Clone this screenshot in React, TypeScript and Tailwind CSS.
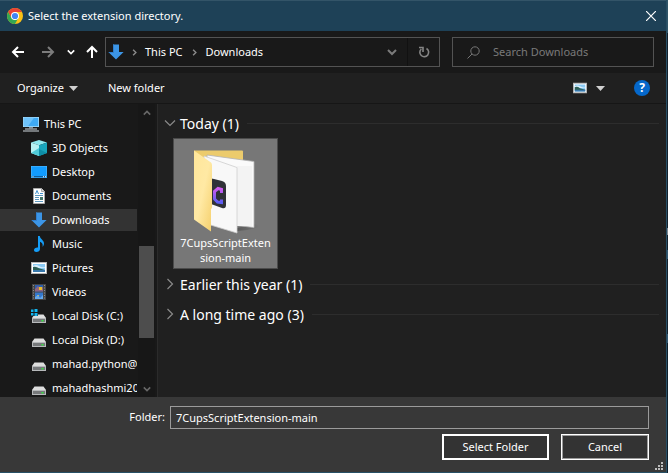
import React from "react";

type IconProps = { className?: string };

const ChromeIcon = () => (
  <svg viewBox="0 0 16 16" className="h-4 w-4 shrink-0" aria-hidden="true">
    <circle cx="8" cy="8" r="8" fill="#fbc116" />
    <path d="M1.1 4A8 8 0 0 1 14.9 4L8 4 4.5 10Z" fill="#ea4335" />
    <path d="M1.1 4A8 8 0 0 0 8 16L11.4 10 8 12 4.5 10Z" fill="#34a853" />
    <circle cx="8" cy="8" r="4" fill="#fff" />
    <circle cx="8" cy="8" r="3.1" fill="#4285f4" />
  </svg>
);

const DownloadIcon = ({ className = "h-4 w-4" }: IconProps) => (
  <svg viewBox="0 0 16 16" className={className} aria-hidden="true">
    <path d="M5 .5h6V8h4.6L8 15.6.4 8H5Z" fill="#3c95e6" />
    <path d="M5 .5h1V9H2L.4 8H5Z" fill="#2f7fd0" />
  </svg>
);

const Arrow = ({ className = "" }: IconProps) => (
  <svg viewBox="0 0 14 14" className={`h-3.5 w-3.5 ${className}`} fill="none" stroke="currentColor" strokeWidth="2" aria-hidden="true">
    <path d="M13 7H2M7 2 2 7l5 5" />
  </svg>
);

const Chevron = ({ className = "" }: IconProps) => (
  <svg viewBox="0 0 10 10" className={className} fill="none" stroke="currentColor" strokeWidth="2" aria-hidden="true">
    <path d="m1 3 4 4 4-4" />
  </svg>
);

const ThinChevron = ({ className = "" }: IconProps) => (
  <svg viewBox="0 0 12 12" className={`h-3 w-3 ${className}`} fill="none" stroke="currentColor" strokeWidth="1.2" aria-hidden="true">
    <path d="m1 3.5 5 5 5-5" />
  </svg>
);

const Caret = ({ className = "" }: IconProps) => (
  <svg viewBox="0 0 9 5" className={`h-[5px] w-[9px] ${className}`} aria-hidden="true">
    <path d="M0 0h9L4.5 5Z" fill="#d0d0d0" />
  </svg>
);

const PictureIcon = ({ className = "h-4 w-4" }: IconProps) => (
  <svg viewBox="0 0 16 16" className={className} aria-hidden="true">
    <rect x=".5" y="2.5" width="15" height="11" fill="#fff" stroke="#b8b8b8" />
    <rect x="2" y="4" width="12" height="8" fill="#8ccbf5" />
    <path d="M2 6q3-2 6 0t6 1v1H2Z" fill="#d9effb" />
    <path d="M2 7q3-1 6 1.2L14 10v.5H2Z" fill="#2d5f55" />
    <path d="M2 10h12v2H2Z" fill="#3878ab" />
  </svg>
);

const PcIcon = () => (
  <svg viewBox="0 0 16 16" className="h-4 w-4" aria-hidden="true">
    <path d="M0 1h16v10H0Z" fill="#a7dcfa" />
    <path d="M.8 1.8h14.4v8.4H.8Z" fill="#3faaf5" />
    <path d="M.8 1.8H11l-6 8.4H.8Z" fill="#6fc3fa" />
    <path d="M6 11h4v1.4H6Z" fill="#7c8a94" />
    <path d="M2 12.6h12v1H2ZM0 14.4h16v1.2H0Z" fill="#d0d8de" />
  </svg>
);

const CubeIcon = () => (
  <svg viewBox="0 0 16 16" className="h-4 w-4" aria-hidden="true">
    <path d="M8 0 16 2.6 8 5.2 0 2.6Z" fill="#8fe9ef" />
    <path d="M0 2.6 8 5.2V16L0 13Z" fill="#b7f2f3" />
    <path d="M0 13 8 8v8Z" fill="#4fcbd8" />
    <path d="M8 5.2 16 2.6V13L8 16Z" fill="#18a5bb" />
    <path d="M8 9 16 13 8 16Z" fill="#0d8da6" />
  </svg>
);

const DesktopIcon = () => (
  <svg viewBox="0 0 16 16" className="h-4 w-4" aria-hidden="true">
    <rect y="2" width="16" height="12" fill="#45b4ff" />
    <rect x=".7" y="2.7" width="14.6" height="9.3" fill="#129cff" />
    <path d="M.7 12h14.6v1.3H.7Z" fill="#0b5d9f" />
    <path d="M1.5 12.2h1v1h-1ZM12 12.2h1v1h-1ZM14 12.2h1v1h-1Z" fill="#fff" />
  </svg>
);

const DocumentIcon = () => (
  <svg viewBox="0 0 16 16" className="h-4 w-4" aria-hidden="true">
    <path d="M2.5.5h8l3 3v12h-11Z" fill="#fff" stroke="#a9a9a9" />
    <path d="M10.5.5v3h3" fill="#ddd" stroke="#a9a9a9" />
    <path d="M4.500 6 6 2.500 7.500 6M9 5.500h3" fill="none" stroke="#3f91ce" />
    <path d="M4 7.500h8M4 9.500h4M4 11.500h4M4 13.500h8" fill="none" stroke="#5c97be" />
    <path d="M9 9h3v3H9Z" fill="#45776a" />
  </svg>
);

const MusicIcon = () => (
  <svg viewBox="0 0 16 16" className="h-4 w-4" aria-hidden="true">
    <path d="M7 0h1.8c.2 3 4.2 4 4.2 7.5 0 1.6-.8 2.6-1.5 3.2.8-2.8-.6-4-2.5-5V13c0 1.8-1.7 3-3.6 3C3.7 16 3 15 3 14c0-1.8 2.2-2.8 4-2.4Z" fill="#159df7" />
  </svg>
);

const VideoIcon = () => (
  <svg viewBox="0 0 16 16" className="h-4 w-4" aria-hidden="true">
    <path d="M1 0h14v16H1Z" fill="#454545" />
    <path d="M4 1h8v6.5H4Z" fill="#2c5fae" />
    <path d="M4 8.5h8V15H4Z" fill="#3478cd" />
    <path d="m4 5 3-3 2 2 3-1v4.5H4Z" fill="#8f6680" />
    <path d="M8 3h3v3H8ZM6 11h2v3H6Z" fill="#e8bd27" />
    <path d="m4 13 3-2 2 3 3-3v4H4Z" fill="#65a9ed" />
    <path d="M2.5 1v14M13.500 1v14" stroke="#8d8d8d" strokeWidth="1" strokeDasharray="1 1.5" />
  </svg>
);

const DiskIcon = ({ system = false }: { system?: boolean }) => (
  <svg viewBox="0 0 16 16" className="h-4 w-4" aria-hidden="true">
    <path d="M3.5 6.5h9L15 10H1Z" fill="#dedede" />
    <path d="M1 10h14v5H1Z" fill="#b7b9bb" />
    <path d="M2 11h12v3H2Z" fill="#77797b" />
    <path d="M10.5 12h2v1.500h-2Z" fill="#35e641" />
    {system && (
      <>
        <path d="M0 0h7v8H0Z" fill="#191919" />
        <path d="M0 1.5h2.5V4H0ZM3.5 1H6.5v3h-3ZM0 5h2.5v2.5H0ZM3.500 5h3v3h-3Z" fill="#13b5ef" />
      </>
    )}
  </svg>
);

const FolderIcon = () => (
  <svg viewBox="0 0 66 84" className="h-[84px] w-[66px]" aria-hidden="true">
    <defs>
      <linearGradient id="flap" x1="0" y1="0" x2="1" y2="1">
        <stop offset="0" stopColor="#ffe69a" />
        <stop offset=".5" stopColor="#ffe9a4" />
        <stop offset="1" stopColor="#f5cf6b" />
      </linearGradient>
      <linearGradient id="logo" x1="0" y1="0" x2="0" y2="1">
        <stop offset="0" stopColor="#d15bf0" />
        <stop offset="1" stopColor="#5b5cf2" />
      </linearGradient>
      <linearGradient id="shade" x1="0" y1="0" x2="1" y2="0">
        <stop offset="0" stopColor="#444" />
        <stop offset="1" stopColor="#777" />
      </linearGradient>
    </defs>
    <path d="M44 78 61 74q5 1 5 3-9 3-22 4Z" fill="url(#shade)" opacity=".6" />
    <path d="M1 .5h48q1 0 1 1V60H1Z" fill="#eccb6c" />
    <path d="m14 5 47 6.500v66L14 72Z" fill="#fafafa" stroke="#b3b3b3" strokeWidth=".8" />
    <path d="M44 16h15v60H44Z" fill="#f3f3f3" />
    <path d="m11 6 33 11.500v65.500L11 73Z" fill="#f8f8f8" stroke="#cecece" strokeWidth=".8" />
    <path d="M18 29q0-1 3 0l8 2q4 1 4 5v19q0 4-4 3l-11-4Z" fill="#303238" />
    <path d="M28.500 43v-3.500l-3.500-1-3.500 3v7.500l3 3 4 .500v-3" fill="none" stroke="url(#logo)" strokeWidth="3" />
    <path d="m1 .5 17 12q1 1 1 3v42l-1 2v22L1 69.500Z" fill="url(#flap)" />
  </svg>
);

const places: { label: string; icon: React.ReactNode }[] = [
  { label: "3D Objects", icon: <CubeIcon /> },
  { label: "Desktop", icon: <DesktopIcon /> },
  { label: "Documents", icon: <DocumentIcon /> },
  { label: "Downloads", icon: <DownloadIcon /> },
  { label: "Music", icon: <MusicIcon /> },
  { label: "Pictures", icon: <PictureIcon /> },
  { label: "Videos", icon: <VideoIcon /> },
  { label: "Local Disk (C:)", icon: <DiskIcon system /> },
  { label: "Local Disk (D:)", icon: <DiskIcon /> },
  { label: "mahad.python@", icon: <DiskIcon /> },
  { label: "mahadhashmi20", icon: <DiskIcon /> },
];

function Sidebar() {
  return (
    <nav aria-label="Places" className="flex w-[158px] shrink-0 overflow-hidden border-r border-[#2b2b2b]">
      <ul className="w-[138px] shrink-0 overflow-hidden pt-2">
        <li>
          <button className="flex h-6 w-full items-center gap-[5px] pl-[23px] whitespace-nowrap">
            <PcIcon />
            <span>This PC</span>
          </button>
        </li>
        {places.map(({ label, icon }) => (
          <li key={label} className="flex h-6 items-center">
            <button
              className={`flex h-[22px] w-[137px] items-center gap-[5px] overflow-hidden pl-[31px] whitespace-nowrap ${
                label === "Downloads" ? "bg-[#333333]" : ""
              }`}
            >
              <span className="shrink-0">{icon}</span>
              <span>{label}</span>
            </button>
          </li>
        ))}
      </ul>
      <div className="flex w-[17px] flex-col items-center bg-[#171717] text-[#686868]">
        <button aria-label="Scroll up" className="flex h-[17px] items-center">
          <Chevron className="h-2 w-2 rotate-180" />
        </button>
        <div className="flex w-full flex-1 flex-col px-px">
          <div className="flex-[125]" />
          <div className="flex-[92] bg-[#4d4d4d]" />
          <div className="flex-[42]" />
        </div>
        <button aria-label="Scroll down" className="flex h-[17px] items-center">
          <Chevron className="h-2 w-2" />
        </button>
      </div>
    </nav>
  );
}

function GroupHeader({ label, open = false }: { label: string; open?: boolean }) {
  return (
    <button className="flex h-[30px] w-full items-center text-left text-[14px]">
      <ThinChevron className={`mr-1 shrink-0 text-[#8a8a8a] ${open ? "" : "-rotate-90"}`} />
      <span className="whitespace-nowrap">{label}</span>
      <span className="ml-2 h-px flex-1 bg-[#2d2d2d]" />
    </button>
  );
}

export default function App() {
  return (
    <div className="flex h-screen bg-[#10202c]">
      <div className="flex min-w-0 flex-1 flex-col border-r border-b border-[#285066] bg-[#191919] font-['Noto_Sans','Open_Sans',sans-serif] text-[11px] text-white">
        <header className="flex h-[31px] shrink-0 items-center border-t border-[#335468] bg-[#1e4157] pr-2.5 pl-[7px]">
          <ChromeIcon />
          <h1 className="ml-[5px] flex-1">Select the extension directory.</h1>
          <button aria-label="Close">
            <svg viewBox="0 0 10 10" className="h-2.5 w-2.5" stroke="white" strokeWidth="1.2">
              <path d="m0 0 10 10M10 0 0 10" />
            </svg>
          </button>
        </header>

        <div className="flex h-[42px] shrink-0 items-center pr-3 pl-[11px]">
          <button aria-label="Back"><Arrow /></button>
          <button aria-label="Forward" className="ml-4 text-[#7c7c7c]"><Arrow className="rotate-180" /></button>
          <button aria-label="Recent locations" className="ml-3"><Chevron className="h-2 w-2" /></button>
          <button aria-label="Up" className="ml-2.5"><Arrow className="rotate-90" /></button>
          <div className="ml-[6px] flex h-[30px] min-w-0 flex-1 items-center border border-[#535353] pl-[2px]">
            <DownloadIcon />
            <Chevron className="mx-[7px] h-[7px] w-[7px] -rotate-90 text-[#8b8b8b]" />
            <button>This PC</button>
            <Chevron className="mx-2 h-[7px] w-[7px] -rotate-90 text-[#8b8b8b]" />
            <button>Downloads</button>
            <button aria-label="Previous locations" className="mr-2.5 ml-auto text-[#7b7b7b]">
              <Chevron className="h-2.5 w-2.5" />
            </button>
            <button aria-label="Refresh" className="flex h-full w-8 items-center justify-center border-l border-[#111111] text-[#858585]">
              <svg viewBox="0 0 12 12" className="h-3 w-3" fill="none" stroke="currentColor" strokeWidth="1.6" aria-hidden="true">
                <path d="M8.5 2.5A4.400 4.400 0 1 1 3.300 3M1 1.500h4V6" />
              </svg>
            </button>
          </div>
          <label className="ml-3 flex h-[30px] w-[202px] items-center border border-[#535353] pl-3.5">
            <svg viewBox="0 0 13 13" className="h-[13px] w-[13px] shrink-0" fill="none" stroke="#777777" aria-hidden="true">
              <circle cx="8" cy="5" r="4.2" />
              <path d="m5 8-4.5 4.5" />
            </svg>
            <input
              type="search"
              aria-label="Search Downloads"
              placeholder="Search Downloads"
              className="ml-[13px] min-w-0 flex-1 bg-transparent outline-none placeholder:text-[#7a7a7a]"
            />
          </label>
        </div>

        <div className="flex h-[31px] shrink-0 items-center border-b border-[#161616] bg-[#202020] pr-4 pl-[17px]">
          <button className="flex items-center gap-[5px]">Organize<Caret /></button>
          <button className="ml-[30px]">New folder</button>
          <button aria-label="Change your view" className="ml-auto flex items-center">
            <PictureIcon className="mr-[9px] h-4 w-3.5" />
            <Caret />
          </button>
          <button aria-label="Help" className="ml-[29px] flex h-4 w-4 items-center justify-center rounded-full bg-[#0568cb] text-[12px] font-bold">
            ?
          </button>
        </div>

        <div className="flex min-h-0 flex-1">
          <Sidebar />
          <main className="min-w-0 flex-1 overflow-hidden bg-[#202020] pt-1 pr-[7px] pl-1.5">
            <GroupHeader label="Today (1)" open />
            <button className="ml-[9px] flex h-[131px] w-[105px] flex-col items-center border border-[#4b4b4b] bg-[#777777] pt-[11px] text-[11px] leading-[15px]">
              <FolderIcon />
              <span className="pt-px">7CupsScriptExten<br />sion-main</span>
            </button>
            <GroupHeader label="Earlier this year (1)" />
            <GroupHeader label="A long time ago (3)" />
          </main>
        </div>

        <footer className="flex shrink-0 flex-col gap-[5px] bg-[#383838] pt-[9px] pb-0.5">
          <div className="flex items-center pr-[17px]">
            <label htmlFor="folder" className="w-[170px] pr-[5px] text-right">Folder:</label>
            <input
              id="folder"
              defaultValue="7CupsScriptExtension-main"
              className="h-[23px] min-w-0 flex-1 border border-[#9b9b9b] bg-[#383838] px-[5px] outline-none"
            />
          </div>
          <div className="flex justify-end">
            <button className="h-[26px] w-[107px] border-2 border-white bg-[#333333]">Select Folder</button>
            <button className="ml-3 h-[26px] w-[88px] border border-white bg-[#9b9b9b] p-px">
              <span className="flex h-full items-center justify-center bg-[#333333]">Cancel</span>
            </button>
            <svg viewBox="0 0 8 8" className="mt-7 ml-[6px] h-2 w-2" fill="#bdbdbd" aria-hidden="true">
              <path d="M6 0h2v2H6ZM3 3h2v2H3ZM6 3h2v2H6ZM0 6h2v2H0ZM3 6h2v2H3ZM6 6h2v2H6Z" />
            </svg>
            <span className="w-[3px]" />
          </div>
        </footer>
      </div>
      <div className="flex w-px flex-col">
        <span className="h-[33px] bg-[#315568]" />
        <span className="h-[195px] bg-[#14212d]" />
        <span className="h-[7px] bg-[#7f8790]" />
        <span className="h-[15px] bg-[#14212d]" />
        <span className="h-[9px] bg-[#34566f]" />
        <span className="h-[75px] bg-[#14212d]" />
        <span className="h-[9px] bg-[#34566f]" />
      </div>
    </div>
  );
}
